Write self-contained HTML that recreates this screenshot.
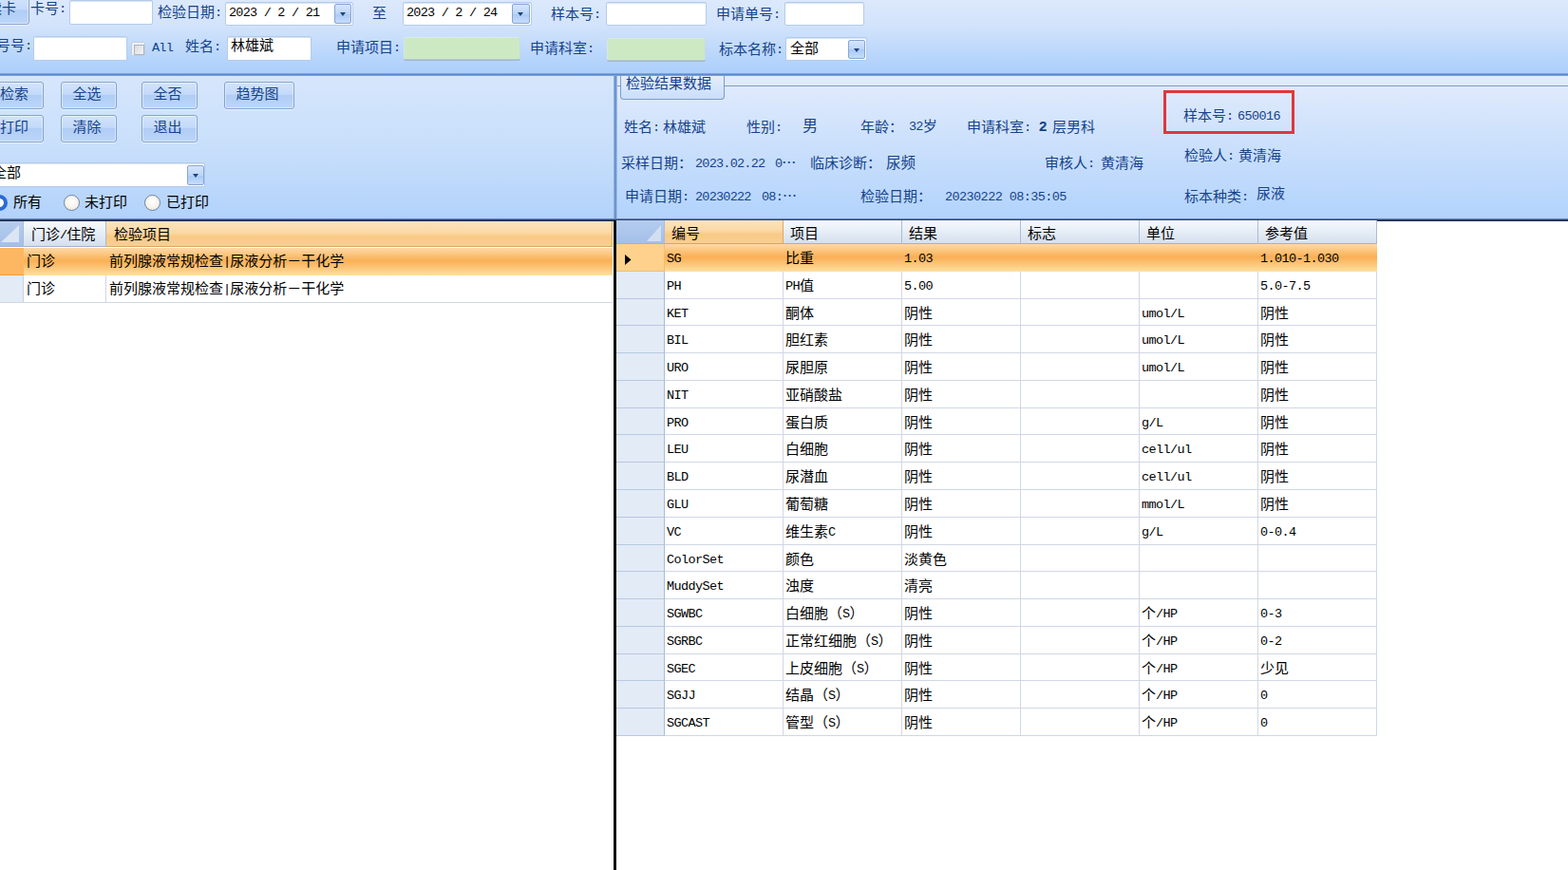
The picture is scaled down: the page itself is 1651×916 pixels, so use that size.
<!DOCTYPE html>
<html lang="zh-CN">
<head>
<meta charset="utf-8">
<title>检验结果查询</title>
<style>
html,body{margin:0;padding:0}
body{width:1651px;height:916px;overflow:hidden;position:relative;background:#fff;
 font-family:"Liberation Mono","Noto Sans CJK SC",sans-serif;font-size:15px;color:#15428b;line-height:18px}
div,span{box-sizing:border-box}
.abs,.t,.in,.btn,.dd{position:absolute}
.l{font-family:"Liberation Mono",monospace;font-size:13.5px;letter-spacing:-0.77px;line-height:0;position:relative;top:-1px}
.w .l{letter-spacing:-0.58px}
.cj{font-family:"Noto Sans CJK SC",sans-serif;line-height:0}
.t{white-space:pre;height:20px;line-height:20px}
.k{color:#000}
/* panels */
#top{left:0;top:0;width:1651px;height:78px;background:linear-gradient(#dce9fc 0%,#d2e3fb 35%,#bcd8fb 70%,#abcefb 100%)}
#topline{left:0;top:77px;width:1651px;height:3px;background:linear-gradient(#8db3e6,#5a8acb 50%,#86aee6)}
#left{left:0;top:80px;width:647px;height:151px;background:linear-gradient(#d6e6fc 0%,#c8dffb 50%,#b2d2fb 100%)}
#right{left:650px;top:80px;width:1001px;height:151px;background:linear-gradient(#dfeafb 0,#dfeafb 10px,#7d9cc4 10px,#7d9cc4 11px,#dfeafc 11px,#cfe2fc 60px,#b2d3fc 151px)}
#split{left:646px;top:80px;width:4px;height:151px;background:linear-gradient(90deg,#9dbbe6,#6a93d1 40%,#6a93d1 70%,#c5d9f5)}
#darkline{left:0;top:230px;width:1651px;height:3px;background:linear-gradient(#7f9fce 0%,#46639a 33%,#1c2b48 66%,#1c2b48 100%)}
#vblack{left:646.4px;top:232px;width:3px;height:684px;background:#0c0c0c}
/* inputs */
.in{background:#fff;border:1px solid #b4cbea;border-radius:2px;box-shadow:inset 0 1px 0 #d7e3f3}
.in.g{background:#cde9c4;border-color:#dcebe0 #c9d8e6 #b9c9d6 #d9e6e4;box-shadow:0 1px 0 #9fb4c9}
.dd{width:18px;height:20px;border:1px solid #86a6d3;border-radius:2px;background:linear-gradient(#d6e5fb,#bcd5f8 50%,#a9c9f5 51%,#c6dcfa)}
.dd:after{content:"";position:absolute;left:5px;top:8px;border-left:3.5px solid transparent;border-right:3.5px solid transparent;border-top:4px solid #21447a}
.btn{height:29px;border:1px solid #86a3cc;border-radius:3px;background:linear-gradient(#d2e3fb 0%,#c4dafa 45%,#b1cdf5 50%,#bcd6f9 100%);box-shadow:0 1px 0 rgba(255,255,255,.6),inset 0 0 0 1px rgba(255,255,255,.45);text-align:center;line-height:28px;white-space:nowrap;padding-right:4px}
/* tab */
#tab{left:653px;top:78px;width:110px;height:27px;border:1px solid #7d9cc4;border-top:0;border-radius:0 0 4px 4px;background:linear-gradient(#e6effc,#c9defb)}
#red{left:1225px;top:95px;width:138px;height:46px;border:3px solid #e0363f}
/* radios */
.rad{position:absolute;width:17px;height:17px;border-radius:50%;border:1.3px solid #71849f;background:radial-gradient(circle at 50% 40%,#fff 0,#f4f2ea 60%,#dcd9cc 100%)}
.chk{position:absolute;width:15px;height:15px;border:1px solid #c3cfdf;background:#eef2f8;border-radius:2px}
.chk i{position:absolute;left:2px;top:2px;width:9px;height:9px;border:1px solid #aab4c3;background:linear-gradient(135deg,#dcdcdc,#f4f4f4)}
/* left grid */
.hd{position:absolute;top:233px;height:27px;line-height:31px;color:#000;white-space:nowrap;font-size:15px;border-right:1px solid #a9bcd6;border-bottom:1px solid #9db4d1;background:linear-gradient(#f7fafd 0%,#e6edf6 50%,#d5dfee 100%)}
.hd.o{background:linear-gradient(#fce4be 0%,#fbd9a6 45%,#f9c986 62%,#f9cf92 100%);border-right-color:#e2a860;border-bottom-color:#d9a462}
.lr{position:absolute;left:0;width:645px;height:29px;color:#000;font-size:15px;line-height:31px;white-space:nowrap}
.lr div{position:absolute;top:0;height:100%}
.selbg{background:linear-gradient(#fdd9a9 0%,#fcc47a 25%,#fab056 47%,#fcc87c 75%,#fde0a2 100%)}
/* right grid */
.gr{position:absolute;left:649px;width:801px;height:28.78px;color:#000;font-size:15px;white-space:nowrap}
.gr .ind{position:absolute;left:0;top:0;width:51px;height:100%;background:#e3ebf7;border-right:1px solid #a9bcd6;border-bottom:1px solid #b9c9e0}
.gr .ind svg{position:absolute;left:8.5px;top:11px}
.gr .c{position:absolute;top:0;width:125px;height:100%;line-height:33px;padding-left:2px;border-right:1px solid #d0d7e5;border-bottom:1px solid #d0d7e5;overflow:hidden}
.gr .c .l{font-size:13.5px;letter-spacing:-0.6px}
.c0{left:51px}.c1{left:176px}.c2{left:301px}.c3{left:426px}.c4{left:551px}.c5{left:676px}
.gr.sel{background:linear-gradient(#fdd9a9 0%,#fcc47a 25%,#fab056 47%,#fcc87c 75%,#fde0a2 100%)}
.gr.sel .ind{background:#fed28d;border-color:#f3bd72}
.gr.sel .c{border-color:transparent}
.tri{position:absolute;width:0;height:0}
</style>
</head>
<body>
<div id="top" class="abs"></div>
<div id="left" class="abs"></div>
<div id="right" class="abs"></div>
<div id="split" class="abs"></div>
<div id="tab" class="abs"></div>
<div id="topline" class="abs"></div>
<div id="darkline" class="abs"></div>
<div id="vblack" class="abs"></div>

<!-- top row 1 -->
<div class="btn" style="left:-30px;top:-4px;width:61px;height:30px;text-align:right;padding-right:13px;line-height:27px">读卡</div>
<div class="t" style="left:32px;top:1px">卡号<span class="l">:</span></div>
<div class="in" style="left:73px;top:0;width:88px;height:26px"></div>
<div class="t" style="left:166px;top:5px">检验日期<span class="l">:</span></div>
<div class="in" style="left:237px;top:2px;width:135px;height:25px"></div>
<div class="t k" style="left:241px;top:5px"><span class="l">2023 / 2 / 21</span></div>
<div class="dd" style="left:352px;top:4px;height:21px"></div>
<div class="t" style="left:392px;top:6px">至</div>
<div class="in" style="left:424px;top:2px;width:136px;height:25px"></div>
<div class="t k" style="left:428px;top:5px"><span class="l">2023 / 2 / 24</span></div>
<div class="dd" style="left:539px;top:4px;width:19px;height:21px"></div>
<div class="t" style="left:580px;top:7px">样本号<span class="l">:</span></div>
<div class="in" style="left:638px;top:2px;width:106px;height:25px"></div>
<div class="t" style="left:754px;top:7px">申请单号<span class="l">:</span></div>
<div class="in" style="left:826px;top:2px;width:84px;height:25px"></div>
<!-- top row 2 -->
<div class="t" style="left:-19px;top:40px">登号号<span class="l">:</span></div>
<div class="in" style="left:35px;top:38px;width:99px;height:26px"></div>
<div class="chk" style="left:138px;top:44px"><i></i></div>
<div class="t" style="left:160px;top:42px"><span class="l">All</span></div>
<div class="t" style="left:195px;top:41px">姓名<span class="l">:</span></div>
<div class="in" style="left:239px;top:38px;width:89px;height:26px"></div>
<div class="t k" style="left:243px;top:40px">林雄斌</div>
<div class="t" style="left:354px;top:42px">申请项目<span class="l">:</span></div>
<div class="in g" style="left:425px;top:39px;width:123px;height:24px"></div>
<div class="t" style="left:558px;top:43px">申请科室<span class="l">:</span></div>
<div class="in g" style="left:639px;top:40px;width:104px;height:24px"></div>
<div class="t" style="left:757px;top:44px">标本名称<span class="l">:</span></div>
<div class="in" style="left:827px;top:39px;width:86px;height:25px"></div>
<div class="t k" style="left:832px;top:43px">全部</div>
<div class="dd" style="left:893px;top:42px"></div>

<!-- left buttons -->
<div class="btn" style="left:-12px;top:86px;width:58px">检索</div>
<div class="btn" style="left:64px;top:86px;width:59px">全选</div>
<div class="btn" style="left:149px;top:86px;width:59px">全否</div>
<div class="btn" style="left:236px;top:86px;width:74px">趋势图</div>
<div class="btn" style="left:-12px;top:121px;width:58px">打印</div>
<div class="btn" style="left:64px;top:121px;width:59px">清除</div>
<div class="btn" style="left:149px;top:121px;width:59px">退出</div>
<div class="in" style="left:-20px;top:171px;width:236px;height:26px"></div>
<div class="t k" style="left:-8px;top:174px">全部</div>
<div class="dd" style="left:197px;top:174px;height:21px"></div>
<div class="rad" style="left:-9px;top:205px;border:4px solid #2b6bd6;background:#fff"></div>
<div class="t k" style="left:14px;top:205px">所有</div>
<div class="rad" style="left:67px;top:205px"></div>
<div class="t k" style="left:89px;top:205px">未打印</div>
<div class="rad" style="left:152px;top:205px"></div>
<div class="t k" style="left:175px;top:205px">已打印</div>

<!-- right info -->
<div class="t" style="left:659px;top:80px;font-size:15px">检验结果数据</div>
<div class="t" style="left:657px;top:126px">姓名<span class="l">:</span></div>
<div class="t" style="left:698px;top:126px">林雄斌</div>
<div class="t" style="left:786px;top:126px">性别<span class="l">:</span></div>
<div class="t" style="left:845px;top:124px;font-size:16px">男</div>
<div class="t" style="left:906px;top:126px">年龄：</div>
<div class="t" style="left:957px;top:125px"><span class="l">32</span>岁</div>
<div class="t" style="left:1018px;top:126px">申请科室<span class="l">:</span></div>
<div class="t" style="left:1094px;top:123px;font-family:'Liberation Sans',sans-serif;font-weight:bold;font-size:15px">2</div>
<div class="t" style="left:1108px;top:126px">层男科</div>
<div class="t" style="left:654px;top:164px">采样日期：</div>
<div class="t" style="left:732px;top:164px"><span class="l">2023.02.22</span></div>
<div class="t" style="left:816px;top:164px"><span class="l">0</span><span class="cj">…</span></div>
<div class="t" style="left:853px;top:164px">临床诊断：</div>
<div class="t" style="left:933px;top:163px;font-size:15.5px">尿频</div>
<div class="t" style="left:1100px;top:164px">审核人<span class="l">:</span></div>
<div class="t" style="left:1159px;top:164px">黄清海</div>
<div class="t" style="left:658px;top:199px">申请日期<span class="l">:</span></div>
<div class="t" style="left:732px;top:199px"><span class="l">20230222</span></div>
<div class="t" style="left:802px;top:199px"><span class="l">08:</span><span class="cj">…</span></div>
<div class="t" style="left:906px;top:199px">检验日期：</div>
<div class="t w" style="left:995px;top:199px"><span class="l">20230222 08:35:05</span></div>
<div id="red" class="abs"></div>
<div class="t" style="left:1246px;top:114px">样本号<span class="l">:</span></div>
<div class="t w" style="left:1303px;top:114px"><span class="l">650016</span></div>
<div class="t" style="left:1247px;top:156px">检验人<span class="l">:</span></div>
<div class="t" style="left:1304px;top:156px">黄清海</div>
<div class="t" style="left:1247px;top:199px">标本种类<span class="l">:</span></div>
<div class="t" style="left:1323px;top:196px">尿液</div>

<!-- left grid -->
<div class="hd" style="left:0;width:25px;background:linear-gradient(#b4ccee,#a4c0e9)"></div>
<svg class="abs" style="left:0;top:236px" width="22" height="20"><path d="M20 1 L20 19 L1 19 Z" fill="#dbe5f3"/></svg>
<div class="hd" style="left:25px;width:87px;padding-left:8px">门诊<span class="l">/</span>住院</div>
<div class="hd o" style="left:112px;width:533px;padding-left:8px">检验项目</div>
<div class="lr selbg" style="top:261px"><div style="left:0;width:25px;background:#fdb762;border-bottom:1px solid #f19b3c"></div><div style="left:28px">门诊</div><div style="left:115px">前列腺液常规检查<span class="l">|</span>尿液分析－干化学</div></div>
<div class="lr" style="top:290px;border-bottom:1px solid #d0d7e5"><div style="left:0;width:25px;background:#e3ebf7;border-right:1px solid #c5d2e6"></div><div style="left:28px">门诊</div><div style="left:111px;width:1px;background:#d0d7e5"></div><div style="left:115px">前列腺液常规检查<span class="l">|</span>尿液分析－干化学</div></div>

<!-- right grid header -->
<div class="hd" style="left:649px;top:232px;height:25px;width:51px;background:linear-gradient(#b4ccee,#a4c0e9)"></div>
<svg class="abs" style="left:680px;top:236px" width="18" height="19"><path d="M16 1 L16 18 L1 18 Z" fill="#d3dff0"/></svg>
<div class="hd o" style="left:700px;top:232px;height:25px;line-height:31px;width:125px;padding-left:7px">编号</div>
<div class="hd" style="left:825px;top:232px;height:25px;line-height:31px;width:125px;padding-left:7px">项目</div>
<div class="hd" style="left:950px;top:232px;height:25px;line-height:31px;width:125px;padding-left:7px">结果</div>
<div class="hd" style="left:1075px;top:232px;height:25px;line-height:31px;width:125px;padding-left:7px">标志</div>
<div class="hd" style="left:1200px;top:232px;height:25px;line-height:31px;width:125px;padding-left:7px">单位</div>
<div class="hd" style="left:1325px;top:232px;height:25px;line-height:31px;width:125px;padding-left:7px">参考值</div>
<div class="gr sel" style="top:257.00px">
<div class="ind"><svg width="8" height="11" viewBox="0 0 8 11"><path d="M0 0 L6.5 5.5 L0 11 Z" fill="#000"/></svg></div>
<div class="c c0"><span class="l">SG</span></div>
<div class="c c1">比重</div>
<div class="c c2"><span class="l">1.03</span></div>
<div class="c c3"></div>
<div class="c c4"></div>
<div class="c c5"><span class="l">1.010-1.030</span></div>
</div>
<div class="gr" style="top:285.78px">
<div class="ind"></div>
<div class="c c0"><span class="l">PH</span></div>
<div class="c c1"><span class="l">PH</span>值</div>
<div class="c c2"><span class="l">5.00</span></div>
<div class="c c3"></div>
<div class="c c4"></div>
<div class="c c5"><span class="l">5.0-7.5</span></div>
</div>
<div class="gr" style="top:314.56px">
<div class="ind"></div>
<div class="c c0"><span class="l">KET</span></div>
<div class="c c1">酮体</div>
<div class="c c2">阴性</div>
<div class="c c3"></div>
<div class="c c4"><span class="l">umol/L</span></div>
<div class="c c5">阴性</div>
</div>
<div class="gr" style="top:343.34px">
<div class="ind"></div>
<div class="c c0"><span class="l">BIL</span></div>
<div class="c c1">胆红素</div>
<div class="c c2">阴性</div>
<div class="c c3"></div>
<div class="c c4"><span class="l">umol/L</span></div>
<div class="c c5">阴性</div>
</div>
<div class="gr" style="top:372.12px">
<div class="ind"></div>
<div class="c c0"><span class="l">URO</span></div>
<div class="c c1">尿胆原</div>
<div class="c c2">阴性</div>
<div class="c c3"></div>
<div class="c c4"><span class="l">umol/L</span></div>
<div class="c c5">阴性</div>
</div>
<div class="gr" style="top:400.90px">
<div class="ind"></div>
<div class="c c0"><span class="l">NIT</span></div>
<div class="c c1">亚硝酸盐</div>
<div class="c c2">阴性</div>
<div class="c c3"></div>
<div class="c c4"></div>
<div class="c c5">阴性</div>
</div>
<div class="gr" style="top:429.68px">
<div class="ind"></div>
<div class="c c0"><span class="l">PRO</span></div>
<div class="c c1">蛋白质</div>
<div class="c c2">阴性</div>
<div class="c c3"></div>
<div class="c c4"><span class="l">g/L</span></div>
<div class="c c5">阴性</div>
</div>
<div class="gr" style="top:458.46px">
<div class="ind"></div>
<div class="c c0"><span class="l">LEU</span></div>
<div class="c c1">白细胞</div>
<div class="c c2">阴性</div>
<div class="c c3"></div>
<div class="c c4"><span class="l">cell/ul</span></div>
<div class="c c5">阴性</div>
</div>
<div class="gr" style="top:487.24px">
<div class="ind"></div>
<div class="c c0"><span class="l">BLD</span></div>
<div class="c c1">尿潜血</div>
<div class="c c2">阴性</div>
<div class="c c3"></div>
<div class="c c4"><span class="l">cell/ul</span></div>
<div class="c c5">阴性</div>
</div>
<div class="gr" style="top:516.02px">
<div class="ind"></div>
<div class="c c0"><span class="l">GLU</span></div>
<div class="c c1">葡萄糖</div>
<div class="c c2">阴性</div>
<div class="c c3"></div>
<div class="c c4"><span class="l">mmol/L</span></div>
<div class="c c5">阴性</div>
</div>
<div class="gr" style="top:544.80px">
<div class="ind"></div>
<div class="c c0"><span class="l">VC</span></div>
<div class="c c1">维生素<span class="l">C</span></div>
<div class="c c2">阴性</div>
<div class="c c3"></div>
<div class="c c4"><span class="l">g/L</span></div>
<div class="c c5"><span class="l">0-0.4</span></div>
</div>
<div class="gr" style="top:573.58px">
<div class="ind"></div>
<div class="c c0"><span class="l">ColorSet</span></div>
<div class="c c1">颜色</div>
<div class="c c2">淡黄色</div>
<div class="c c3"></div>
<div class="c c4"></div>
<div class="c c5"></div>
</div>
<div class="gr" style="top:602.36px">
<div class="ind"></div>
<div class="c c0"><span class="l">MuddySet</span></div>
<div class="c c1">浊度</div>
<div class="c c2">清亮</div>
<div class="c c3"></div>
<div class="c c4"></div>
<div class="c c5"></div>
</div>
<div class="gr" style="top:631.14px">
<div class="ind"></div>
<div class="c c0"><span class="l">SGWBC</span></div>
<div class="c c1">白细胞（<span class="l">S</span>）</div>
<div class="c c2">阴性</div>
<div class="c c3"></div>
<div class="c c4">个<span class="l">/HP</span></div>
<div class="c c5"><span class="l">0-3</span></div>
</div>
<div class="gr" style="top:659.92px">
<div class="ind"></div>
<div class="c c0"><span class="l">SGRBC</span></div>
<div class="c c1">正常红细胞（<span class="l">S</span>）</div>
<div class="c c2">阴性</div>
<div class="c c3"></div>
<div class="c c4">个<span class="l">/HP</span></div>
<div class="c c5"><span class="l">0-2</span></div>
</div>
<div class="gr" style="top:688.70px">
<div class="ind"></div>
<div class="c c0"><span class="l">SGEC</span></div>
<div class="c c1">上皮细胞（<span class="l">S</span>）</div>
<div class="c c2">阴性</div>
<div class="c c3"></div>
<div class="c c4">个<span class="l">/HP</span></div>
<div class="c c5">少见</div>
</div>
<div class="gr" style="top:717.48px">
<div class="ind"></div>
<div class="c c0"><span class="l">SGJJ</span></div>
<div class="c c1">结晶（<span class="l">S</span>）</div>
<div class="c c2">阴性</div>
<div class="c c3"></div>
<div class="c c4">个<span class="l">/HP</span></div>
<div class="c c5"><span class="l">0</span></div>
</div>
<div class="gr" style="top:746.26px">
<div class="ind"></div>
<div class="c c0"><span class="l">SGCAST</span></div>
<div class="c c1">管型（<span class="l">S</span>）</div>
<div class="c c2">阴性</div>
<div class="c c3"></div>
<div class="c c4">个<span class="l">/HP</span></div>
<div class="c c5"><span class="l">0</span></div>
</div>
</body>
</html>
